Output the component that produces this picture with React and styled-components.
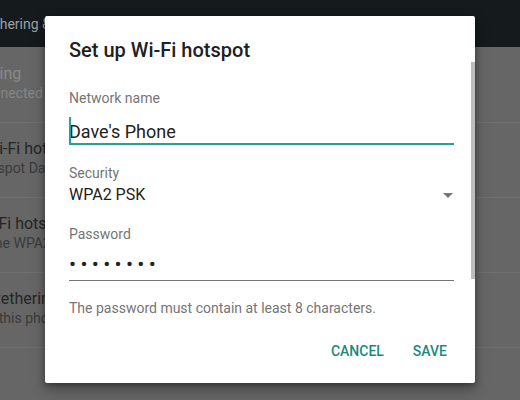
import React from 'react'
import styled, { createGlobalStyle } from 'styled-components'

const GlobalStyle = createGlobalStyle`
  html, body {
    margin: 0;
    padding: 0;
    background: #666666;
  }
  body {
    font-family: Roboto, "Noto Sans", sans-serif;
  }
`

const rows = [
  { title: 'USB tethering', titleShift: -76, summary: 'USB not connected', summaryShift: -76, muted: true },
  { title: 'Wi-Fi hotspot', titleShift: -15, summary: "Hotspot Dave's Phone active", summaryShift: -25 },
  { title: 'Set up Wi-Fi hotspot', titleShift: -73, summary: "Dave's Phone WPA2 PSK portable Wi-Fi hotspot", summaryShift: -73 },
  { title: 'Bluetooth tethering', titleShift: -77, summary: "Not sharing this phone's Internet connection", summaryShift: -77 },
]

const App = () => {
  return (
    <Screen>
      <GlobalStyle />
      <AppBar>
        <BarTitle>Tethering &amp; portable hotspot</BarTitle>
      </AppBar>
      <SettingsList>
        {rows.map(row => (
          <SettingRow key={row.title}>
            <RowTitle $shift={row.titleShift} $muted={row.muted}>{row.title}</RowTitle>
            <RowSummary $shift={row.summaryShift} $muted={row.muted}>{row.summary}</RowSummary>
          </SettingRow>
        ))}
      </SettingsList>

      <Dialog>
        <DialogTitle>Set up Wi-Fi hotspot</DialogTitle>

        <FieldLabel>Network name</FieldLabel>
        <TextField>
          <Caret />
          Dave's Phone
        </TextField>

        <FieldLabel $gap={18}>Security</FieldLabel>
        <Spinner>
          <span>WPA2 PSK</span>
          <svg width="10" height="5" viewBox="0 0 10 5">
            <path d="M0 0 L10 0 L5 5 Z" fill="#757575" />
          </svg>
        </Spinner>

        <FieldLabel $gap={18}>Password</FieldLabel>
        <PasswordField>••••••••</PasswordField>

        <HelperText>The password must contain at least 8 characters.</HelperText>

        <Actions>
          <FlatButton>Cancel</FlatButton>
          <FlatButton>Save</FlatButton>
        </Actions>

        <ScrollThumb />
      </Dialog>
    </Screen>
  )
}

export default App

const Screen = styled.div`
  position: relative;
  width: 520px;
  height: 400px;
  overflow: hidden;
  background: #666666;
`
const AppBar = styled.div`
  height: 47px;
  background: #151a1d;
  display: flex;
  align-items: center;
  overflow: hidden;
`
const BarTitle = styled.div`
  margin-left: -20px;
  font-size: 14px;
  line-height: 20px;
  color: #9da1a4;
  white-space: nowrap;
`
const SettingsList = styled.div`
  padding-top: 1px;
`
const SettingRow = styled.div`
  padding: 16px 0 20px;
  border-bottom: 1px solid #6f6f6f;
  overflow: hidden;
  white-space: nowrap;
`
const RowTitle = styled.div`
  margin-left: ${p => p.$shift}px;
  font-size: 16px;
  line-height: 20px;
  color: ${p => (p.$muted ? '#8a8a8a' : '#252525')};
`
const RowSummary = styled.div`
  margin-left: ${p => p.$shift}px;
  font-size: 14px;
  line-height: 18px;
  color: ${p => (p.$muted ? '#858585' : '#3a3a3a')};
`
const Dialog = styled.div`
  position: absolute;
  top: 16px;
  left: 45px;
  width: 430px;
  box-sizing: border-box;
  padding: 22px 21px 14px 24px;
  background: #ffffff;
  border-radius: 2px;
  box-shadow: 0 6px 14px rgba(0, 0, 0, 0.35), 0 2px 4px rgba(0, 0, 0, 0.25);
`
const DialogTitle = styled.h2`
  margin: 0 0 26px;
  font-size: 20px;
  line-height: 24px;
  font-weight: 500;
  color: #212121;
`
const FieldLabel = styled.div`
  margin-top: ${p => p.$gap || 0}px;
  font-size: 14px;
  line-height: 20px;
  color: #757575;
`
const TextField = styled.div`
  position: relative;
  margin-top: 12px;
  font-size: 18px;
  line-height: 23px;
  color: #212121;
  border-bottom: 2px solid #26a195;
`
const Caret = styled.span`
  position: absolute;
  left: 0;
  top: -3px;
  width: 2px;
  height: 26px;
  background: #26a195;
`
const Spinner = styled.div`
  margin-top: 1px;
  display: flex;
  align-items: center;
  justify-content: space-between;
  font-size: 16px;
  line-height: 22px;
  color: #212121;
  svg {
    margin-right: 1px;
  }
`
const PasswordField = styled.div`
  padding-top: 5px;
  font-size: 21px;
  line-height: 31px;
  letter-spacing: 4.3px;
  color: #212121;
  border-bottom: 1px solid #757575;
`
const HelperText = styled.div`
  margin-top: 17px;
  font-size: 14px;
  line-height: 20px;
  color: #757575;
`
const Actions = styled.div`
  margin-top: 15px;
  margin-right: -1px;
  display: flex;
  justify-content: flex-end;
  gap: 13px;
`
const FlatButton = styled.button`
  border: none;
  background: none;
  padding: 0 8px;
  font-family: Roboto, "Noto Sans", sans-serif;
  font-size: 14px;
  line-height: 36px;
  font-weight: 500;
  text-transform: uppercase;
  color: #1a8a7d;
  cursor: pointer;
`
const ScrollThumb = styled.div`
  position: absolute;
  top: 46px;
  right: 0;
  width: 4px;
  height: 217px;
  background: #bdbdbd;
`
